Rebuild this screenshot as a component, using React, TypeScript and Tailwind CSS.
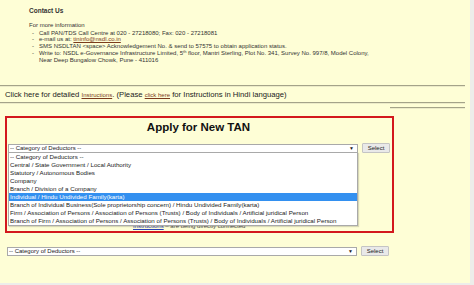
import React from "react";

const items = [
  "-- Category of Deductors --",
  "Central / State Government / Local Authority",
  "Statutory / Autonomous Bodies",
  "Company",
  "Branch / Division of a Company",
  "Individual / Hindu Undivided Family(karta)",
  "Branch of Individual Business(Sole proprietorship concern) / Hindu Undivided Family(karta)",
  "Firm / Association of Persons / Association of Persons (Trusts) / Body of Individuals / Artificial juridical Person",
  "Branch of Firm / Association of Persons / Association of Persons (Trusts) / Body of Individuals / Artificial juridical Person",
];

function SelectRow() {
  return (
    <div className="flex items-center gap-[4px]">
      <div className="w-[350px] h-[9px] bg-white border border-[#a9a9a9] flex items-center justify-between pl-[1px] pr-[3px] text-[6px] leading-[7px] text-[#222]">
        <span>-- Category of Deductors --</span>
        <span className="text-[5px]">▼</span>
      </div>
      <div className="w-[28px] h-[10px] bg-[#e9e9e9] border border-[#c4c4c4] rounded-[1px] flex items-center justify-center text-[6px] leading-[7px] text-[#222]">
        Select
      </div>
    </div>
  );
}

export default function App() {
  return (
    <div className="w-[474px] h-[285px] bg-[#ededea] overflow-hidden font-['Liberation_Sans',Arial,sans-serif]">
      <div className="w-[470px] h-[283px] bg-[#fefed6] pt-[7px]">
        <div className="pl-[29px] text-[#333]">
          <div className="text-[6.5px] leading-[7px] font-bold">Contact Us</div>
          <div className="mt-[8px] text-[6px] leading-[6.7px]">For more information</div>
          <ul className="pl-[3px] text-[6px] leading-[6.7px] mt-[1px]">
            <li className="flex"><span className="w-[7px]">-</span><span>Call PAN/TDS Call Centre at 020 - 27218080; Fax: 020 - 27218081</span></li>
            <li className="flex"><span className="w-[7px]">-</span><span>e-mail us at: <span className="underline text-[#7a3b1b]">tininfo@nsdl.co.in</span></span></li>
            <li className="flex"><span className="w-[7px]">-</span><span>SMS NSDLTAN &lt;space&gt; Acknowledgement No. &amp; send to 57575 to obtain application status.</span></li>
            <li className="flex"><span className="w-[7px]">-</span><span>Write to: NSDL e-Governance Infrastructure Limited, 5<sup className="text-[4px]">th</sup> floor, Mantri Sterling, Plot No. 341, Survey No. 997/8, Model Colony,<br />Near Deep Bungalow Chowk, Pune - 411016</span></li>
          </ul>
        </div>
        <div className="mt-[22px] w-[465px] border-t border-[#a4a389] border-b border-b-[#ecebc8]"></div>
        <div className="pl-[5px] mt-[3px] text-[7.7px] leading-[9px] text-[#222]">
          Click here for detailed <span className="text-[6px] underline text-[#7a3b1b]">Instructions</span>. (Please <span className="text-[6px] underline text-[#7a3b1b]">click here</span> for Instructions in Hindi language)
        </div>
        <div className="mt-[2px] w-[465px] border-t border-[#a4a389] border-b border-b-[#ecebc8]"></div>
        <div className="mt-[3px] ml-[390px] w-[75px] border-t border-[#a4a389] border-b border-b-[#ecebc8]"></div>
        <div className="relative ml-[5px] mt-[7px] w-[389px] h-[117px] border-2 border-[#d3181d]">
          <div className="text-center text-[11.5px] leading-[13px] font-bold text-[#111] mt-[3px] pr-[2px]">Apply for New TAN</div>
          <div className="mt-[9px] ml-[1px]">
            <SelectRow />
          </div>
          <div className="mt-[70px] pl-[126px] text-[6px] leading-[7px] text-[#555]">
            <span className="underline text-[#2a43b5]">Instructions</span> – are being directly connected
          </div>
          <div className="absolute left-[1px] top-[34px] w-[350px] bg-white border border-[#a9a9a9] text-[6.2px] leading-[8px] text-[#222] shadow-[1px_1px_1px_rgba(0,0,0,0.15)]">
            {items.map((t, i) => (
              <div key={i} className={"pl-[1px] whitespace-nowrap overflow-hidden " + (i === 5 ? "bg-[#3390f0] text-white" : "")}>{t}</div>
            ))}
          </div>
        </div>
        <div className="ml-[7px] mt-[13px]">
          <SelectRow />
        </div>
      </div>
    </div>
  );
}
